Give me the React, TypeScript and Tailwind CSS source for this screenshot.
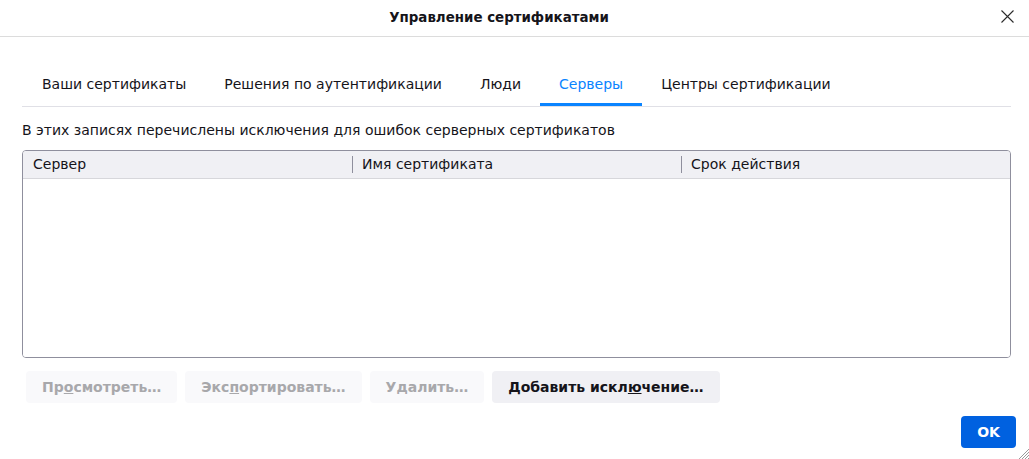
import { useState } from "react";

// Dialog tabs
const tabs = [
  "Ваши сертификаты",
  "Решения по аутентификации",
  "Люди",
  "Серверы",
  "Центры сертификации",
];

// Table column headers
const columns = ["Сервер", "Имя сертификата", "Срок действия"];

export default function App() {
  const [active, setActive] = useState(3);

  return (
    <div
      className="relative flex h-[459px] w-[1029px] flex-col overflow-hidden bg-white text-[#15141a]"
      style={{ fontFamily: '"DejaVu Sans", sans-serif' }}
    >
      {/* Title bar */}
      <div className="flex h-[37px] shrink-0 items-center justify-center border-b border-[#dcdcdc]">
        <span className="pr-[31px] text-[13.4px] font-bold">Управление сертификатами</span>
        <button className="absolute right-[15px] top-[9px] flex h-[14px] w-[14px] items-center justify-center">
          <svg width="13" height="13" viewBox="0 0 13 13">
            <path d="M0.5 0.5 L12.5 12.5 M12.5 0.5 L0.5 12.5" stroke="#2b2b2b" strokeWidth="1.1" />
          </svg>
        </button>
      </div>

      {/* Tabs */}
      <div className="ml-[22px] mr-[18px] mt-[31px] flex border-b border-[#e0e0e6] pl-px">
        {tabs.map((t, i) => (
          <button
            key={t}
            onClick={() => setActive(i)}
            className={
              "flex h-[38px] flex-col justify-between pt-[6px] text-[14px] " +
              (i === active ? "text-[#0a84ff]" : "text-[#15141a]")
            }
          >
            <span className="whitespace-nowrap px-[19px]">{t}</span>
            <span
              className={
                "h-[3px] w-full " + (i === active ? "bg-[#0a84ff]" : "bg-transparent")
              }
            />
          </button>
        ))}
      </div>

      <div className="mx-[22px] mt-[13px] text-[14px]">
        В этих записях перечислены исключения для ошибок серверных сертификатов
      </div>

      {/* Table */}
      <div className="ml-[22px] mr-[18px] mt-[9px] flex h-[208px] flex-col overflow-hidden rounded-[4px] border border-[#8f8f9d]">
        <div className="flex h-[28px] shrink-0 items-center border-b border-[#d7d7db] bg-[#f0f0f4] text-[14px]">
          {columns.map((c, i) => (
            <div key={c} className="flex h-full flex-1 items-center">
              {i > 0 && <span className="h-[17px] w-px bg-[#8f8f9d]" />}
              <span className={i > 0 ? "pl-[9px]" : "pl-[10px]"}>{c}</span>
            </div>
          ))}
        </div>
        <div className="flex-1 bg-white" />
      </div>

      {/* Action buttons */}
      <div className="ml-[26px] mt-[13px] flex gap-2 text-[14px] font-bold">
        <button className="h-[32px] rounded-[4px] bg-[#f9f9fb] px-4 text-[#a8a8ab]">
          Пр<u>о</u>смотреть…
        </button>
        <button className="h-[32px] rounded-[4px] bg-[#f9f9fb] px-4 text-[#a8a8ab]">
          Экс<u>п</u>ортировать…
        </button>
        <button className="h-[32px] rounded-[4px] bg-[#f9f9fb] px-4 text-[#a8a8ab]">
          У<u>д</u>алить…
        </button>
        <button className="h-[32px] rounded-[4px] bg-[#f0f0f4] px-4 text-[#15141a]">
          Добавить искл<u>ю</u>чение…
        </button>
      </div>

      {/* Footer */}
      <div className="mr-[13px] mt-[13px] flex justify-end">
        <button className="h-[32px] w-[55px] rounded-[4px] bg-[#0061e0] text-[14px] font-bold text-white">
          OK
        </button>
      </div>

      {/* Resize grip */}
      <svg className="absolute bottom-0 right-0" width="11" height="11" viewBox="0 0 11 11">
        <path
          d="M11 1 L1 11 M11 4 L4 11 M11 7 L7 11 M11 10 L10 11"
          stroke="#9a9a9a"
          strokeWidth="1"
        />
      </svg>
    </div>
  );
}
